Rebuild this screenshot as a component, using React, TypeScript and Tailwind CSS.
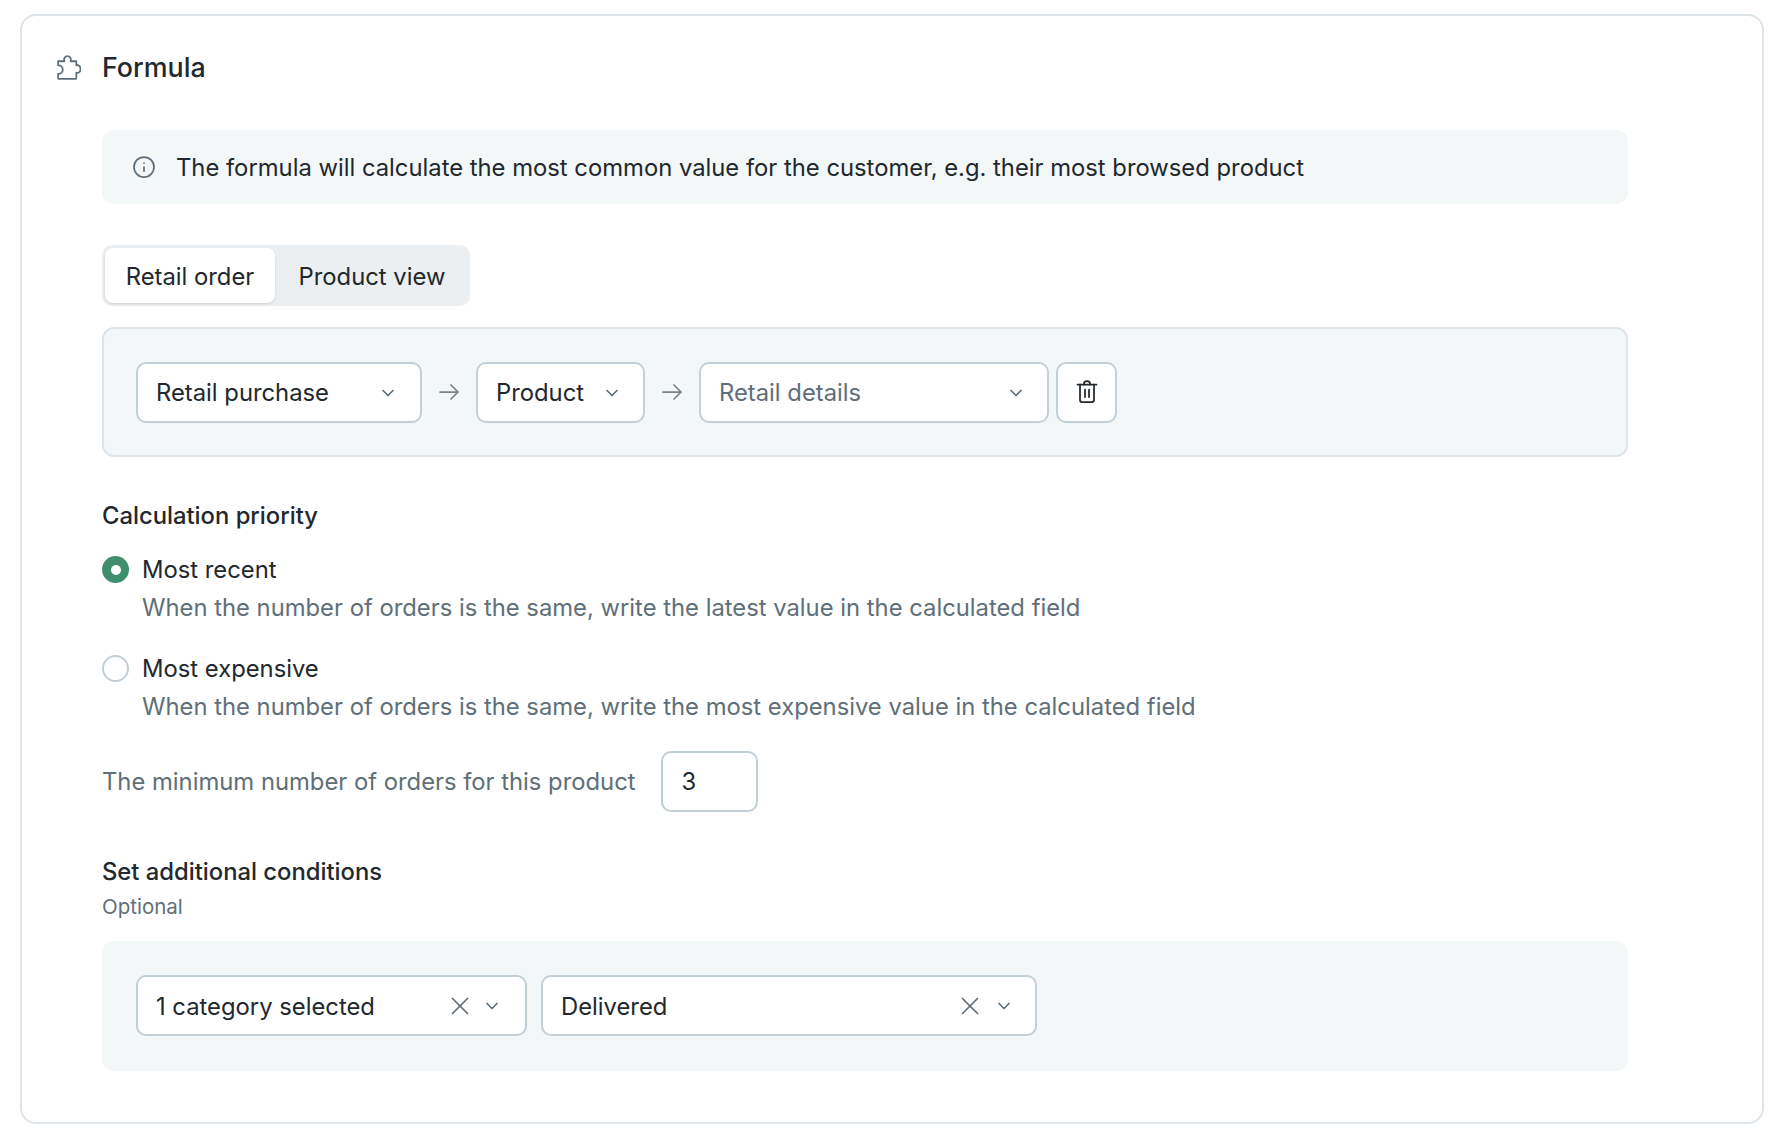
import React from 'react';
import { ChevronDown, Info, X } from 'lucide-react';

const selectBox = 'flex h-[61px] items-center rounded-[10px] border-2 border-[#c3cfd7] bg-white pl-[18px] pt-[1px] text-[23.8px]';

const Chevron = () => <ChevronDown className="h-[20px] w-[20px] shrink-0 text-[#5c6b75]" strokeWidth={2} />;

const Clear = ({ className }: { className: string }) => (
  <X className={`h-[30px] w-[30px] shrink-0 text-[#5f6f79] ${className}`} strokeWidth={1.4} />
);

const FlowArrow = () => (
  <svg width="20" height="16" viewBox="0 0 20 16" fill="none" stroke="#75838c" strokeWidth="1.75" strokeLinecap="round" strokeLinejoin="round">
    <path d="M1 8H19M12 1L19 8L12 15" />
  </svg>
);

const PuzzleIcon = () => (
  <svg width="25" height="25" viewBox="0 0 24 24" fill="none" stroke="#5f6f79" strokeWidth="1.7" strokeLinejoin="round">
    <path d="M2 6H8C7 3 9 1 11 1C13 1 15 3 14 6H19.5V10C22 9 23.5 11 23.5 13.5C23.5 16 22 17.5 19.5 17V22a1 1 0 0 1-1 1H3a1 1 0 0 1-1-1V18C5 18.5 6.5 16 6.5 14C6.5 12 5 9.5 2 10Z" />
  </svg>
);

const TrashIcon = () => (
  <svg width="24" height="24" viewBox="0 0 24 24" fill="none" stroke="#22282d" strokeWidth="1.75" strokeLinecap="round" strokeLinejoin="round">
    <path d="M2.5 4.5H21.5" />
    <path d="M9 4.5V3.5C9 1.5 10.5 1 12 1C13.5 1 15 1.5 15 3.5V4.5" />
    <path d="M5 4.5V20a2 2 0 0 0 2 2H17a2 2 0 0 0 2-2V4.5" />
    <path d="M10 9.5V17M14 9.5V17" />
  </svg>
);

const Radio = ({ checked }: { checked?: boolean }) =>
  checked ? (
    <span className="flex h-[27px] w-[27px] shrink-0 items-center justify-center rounded-full bg-[#3f8f6f]">
      <span className="h-[10px] w-[10px] rounded-full bg-white" />
    </span>
  ) : (
    <span className="h-[27px] w-[27px] shrink-0 rounded-full border-2 border-[#c3cfd7] bg-white" />
  );

const PriorityOption = ({ label, hint, checked }: { label: string; hint: string; checked?: boolean }) => (
  <div>
    <div className="flex h-[27px] items-center gap-[13px]">
      <Radio checked={checked} />
      <span className="text-[23.8px] leading-[27px] text-[#22282d]">{label}</span>
    </div>
    <p className="mt-[7px] pl-[40px] text-[23.8px] leading-[36px] text-[#5f6f79]">{hint}</p>
  </div>
);

export default function App() {
  return (
    <div className="bg-white pl-5 pt-[14px] font-['Inter',sans-serif]">
      <div className="h-[1110px] w-[1744px] rounded-[16px] border-2 border-[#dde5ea] bg-white">
        <div className="flex h-[102px] items-center pl-[34px]">
          <PuzzleIcon />
          <h2 className="ml-[21px] text-[26.8px] font-medium text-[#22282d]">Formula</h2>
        </div>

        <div className="ml-[80px] w-[1526px]">
          <div className="mt-[12px] flex h-[74px] items-center rounded-[12px] bg-[#f3f7f8] pl-[30px]">
            <Info className="h-[24px] w-[24px] text-[#5f6f79]" strokeWidth={1.75} />
            <span className="ml-[20px] pt-[2px] text-[23.8px] text-[#22282d]">
              The formula will calculate the most common value for the customer, e.g. their most browsed product
            </span>
          </div>

          <div className="mt-[41px] flex h-[61px] w-[368px] items-center rounded-[10px] bg-[#ebeff1] px-[3px]">
            <div className="flex h-[55px] w-[170px] items-center justify-center rounded-[8px] bg-white pt-[2px] text-[23.8px] text-[#22282d] shadow-sm">
              Retail order
            </div>
            <div className="flex h-[55px] flex-1 items-center justify-center pl-[2px] pt-[2px] text-[23.8px] text-[#22282d]">
              Product view
            </div>
          </div>

          <div className="mt-[21px] flex h-[130px] items-center rounded-[12px] border-2 border-[#dde5ea] bg-[#f3f7f8] pl-[32px]">
            <div className={`${selectBox} w-[286px] justify-between pr-[22px] text-[#22282d]`}>
              Retail purchase
              <Chevron />
            </div>
            <div className="flex w-[54px] justify-center"><FlowArrow /></div>
            <div className={`${selectBox} w-[169px] justify-between pr-[21px] text-[#22282d]`}>
              Product
              <Chevron />
            </div>
            <div className="flex w-[54px] justify-center"><FlowArrow /></div>
            <div className={`${selectBox} w-[350px] justify-between pr-[21px] text-[#5f6f79]`}>
              Retail details
              <Chevron />
            </div>
            <div className="ml-[7px] flex h-[61px] w-[61px] items-center justify-center rounded-[10px] border-2 border-[#c3cfd7] bg-white">
              <TrashIcon />
            </div>
          </div>

          <h3 className="mt-[41px] text-[23.8px] font-medium leading-[36px] text-[#22282d]">Calculation priority</h3>
          <div className="mt-[22px] flex flex-col gap-[29px]">
            <PriorityOption
              checked
              label="Most recent"
              hint="When the number of orders is the same, write the latest value in the calculated field"
            />
            <PriorityOption
              label="Most expensive"
              hint="When the number of orders is the same, write the most expensive value in the calculated field"
            />
          </div>

          <div className="mt-[26px] flex items-center">
            <span className="text-[23.8px] text-[#5f6f79]">The minimum number of orders for this product</span>
            <div className="ml-[25px] flex h-[61px] w-[97px] items-center rounded-[10px] border-2 border-[#c3cfd7] bg-white pl-[19px] text-[23.8px] text-[#22282d]">
              3
            </div>
          </div>

          <h3 className="mt-[42px] text-[23.8px] font-medium leading-[36px] text-[#22282d]">Set additional conditions</h3>
          <p className="mt-[2px] text-[20.5px] leading-[30px] text-[#5f6f79]">Optional</p>

          <div className="mt-[19px] flex h-[130px] items-center gap-[14px] rounded-[12px] bg-[#f3f7f8] pb-[2px] pl-[34px]">
            <div className={`${selectBox} w-[391px] pr-[23px] text-[#22282d]`}>
              <span className="flex-1 pt-[2px]">1 category selected</span>
              <Clear className="mr-[7px]" />
              <Chevron />
            </div>
            <div className={`${selectBox} w-[496px] pr-[21px] text-[#22282d]`}>
              <span className="flex-1 pt-[2px]">Delivered</span>
              <Clear className="mr-[9px]" />
              <Chevron />
            </div>
          </div>
        </div>
      </div>
    </div>
  );
}
